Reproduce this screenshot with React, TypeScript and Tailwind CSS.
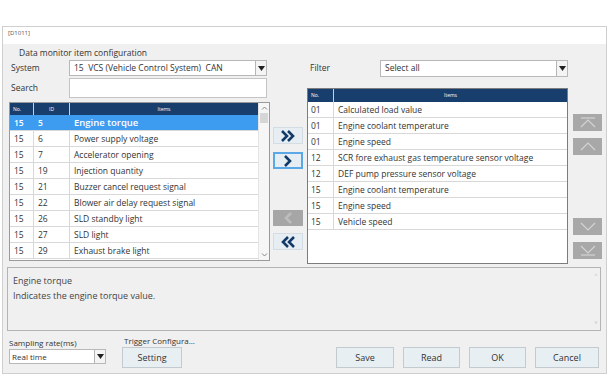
import React from 'react';

const leftRows = [
  ['15', '5', 'Engine torque'],
  ['15', '6', 'Power supply voltage'],
  ['15', '7', 'Accelerator opening'],
  ['15', '19', 'Injection quantity'],
  ['15', '21', 'Buzzer cancel request signal'],
  ['15', '22', 'Blower air delay request signal'],
  ['15', '26', 'SLD standby light'],
  ['15', '27', 'SLD light'],
  ['15', '29', 'Exhaust brake light'],
];

const rightRows = [
  ['01', 'Calculated load value'],
  ['01', 'Engine coolant temperature'],
  ['01', 'Engine speed'],
  ['12', 'SCR fore exhaust gas temperature sensor voltage'],
  ['12', 'DEF pump pressure sensor voltage'],
  ['15', 'Engine coolant temperature'],
  ['15', 'Engine speed'],
  ['15', 'Vehicle speed'],
];

const Arrow = () => (
  <div className="flex h-full w-[11px] items-center justify-center border-l border-[#b5b5b5] bg-[#f4f4f4]">
    <svg width="7" height="5" viewBox="0 0 7 5">
      <path d="M0 0H7L3.5 5Z" fill="#222" />
    </svg>
  </div>
);

const Select = ({ value, className }: { value: string; className: string }) => (
  <div className={`flex items-center border border-[#b8b8b8] bg-white ${className}`}>
    <span className="flex-1 truncate whitespace-pre pl-[4px]">{value}</span>
    <Arrow />
  </div>
);

const Chevrons = ({ dir, double, color }: { dir: 'l' | 'r'; double?: boolean; color: string }) => {
  const rot = dir === 'r' ? 0 : 180;
  return (
    <svg width="14" height="12" viewBox="0 0 14 12" style={{ transform: `rotate(${rot}deg)` }}>
      {double ? (
        <>
          <path d="M1 1L6 6L1 11" fill="none" stroke={color} strokeWidth="2.6" />
          <path d="M7 1L12 6L7 11" fill="none" stroke={color} strokeWidth="2.6" />
        </>
      ) : (
        <path d="M4 1L9 6L4 11" fill="none" stroke={color} strokeWidth="2.6" />
      )}
    </svg>
  );
};

const SideBtn = ({ icon }: { icon: 'top' | 'up' | 'down' | 'bottom' }) => (
  <div className="flex h-[17px] w-[29px] items-center justify-center bg-[#a8a8a8]">
    <svg width="16" height="11" viewBox="0 0 16 11">
      {icon === 'top' && (
        <>
          <path d="M1 1H15" stroke="#d4d4d4" strokeWidth="1.2" />
          <path d="M1 10L8 3L15 10" fill="none" stroke="#d4d4d4" strokeWidth="1.2" />
        </>
      )}
      {icon === 'up' && <path d="M1 9L8 2L15 9" fill="none" stroke="#d4d4d4" strokeWidth="1.2" />}
      {icon === 'down' && <path d="M1 2L8 9L15 2" fill="none" stroke="#d4d4d4" strokeWidth="1.2" />}
      {icon === 'bottom' && (
        <>
          <path d="M1 1L8 8L15 1" fill="none" stroke="#d4d4d4" strokeWidth="1.2" />
          <path d="M1 10H15" stroke="#d4d4d4" strokeWidth="1.2" />
        </>
      )}
    </svg>
  </div>
);

const Btn = ({ label, className }: { label: string; className: string }) => (
  <div className={`flex h-[21px] items-center justify-center border border-[#c3cbd0] bg-[#e8eff3] text-[9px] text-[#333] ${className}`}>
    {label}
  </div>
);

export default function App() {
  return (
    <div className="h-[386px] w-[609px] bg-white pt-[26px] pl-[2px] text-[#333]" style={{ fontFamily: '"Open Sans", "Noto Sans", sans-serif' }}>
      <div className="flex h-[348px] w-[605px] flex-col border border-[#cfcfcf] bg-[#f0f0f0]">
        <div className="h-[17px] bg-white pl-[5px] pt-[2px] text-[6px] text-[#555]">[D1011]</div>

        <div className="flex">
          {/* left column */}
          <div className="ml-[6px] flex w-[261px] flex-col text-[8.5px]">
            <div className="mt-[1px] h-[15px] pl-[10px] leading-[15px]">Data monitor item configuration</div>
            <div className="flex h-[16px] items-center">
              <span className="w-[60px] pl-[2px]">System</span>
              <Select value="15  VCS (Vehicle Control System)  CAN" className="h-[16px] w-[198px]" />
            </div>
            <div className="mt-[2px] flex h-[20px] items-center">
              <span className="w-[60px] pl-[2px]">Search</span>
              <div className="h-[20px] w-[198px] border border-[#c4c4c4] bg-white" />
            </div>
            <div className="mt-[4px] flex h-[159px] border border-[#9a9a9a] bg-white">
              <div className="flex flex-1 flex-col">
                <div className="flex h-[12px] bg-[#173e6c] text-[5px] text-white">
                  <span className="w-[24px] border-r border-[#d0d0d0] pl-[3px] leading-[12px]">No.</span>
                  <span className="w-[36px] border-r border-[#d0d0d0] text-center leading-[12px]">ID</span>
                  <span className="flex-1 text-center leading-[12px]">Items</span>
                </div>
                {leftRows.map((r, i) => (
                  <div
                    key={i}
                    className={`flex h-[16px] border-b border-[#d8d8d8] ${i === 0 ? 'bg-[#3d9cf0] font-semibold text-white' : ''}`}
                  >
                    <span className={`w-[24px] pl-[4px] leading-[16px] ${i === 0 ? '' : 'border-r border-[#d8d8d8]'}`}>{r[0]}</span>
                    <span className={`w-[36px] pl-[4px] leading-[16px] ${i === 0 ? '' : 'border-r border-[#d8d8d8]'}`}>{r[1]}</span>
                    <span className={`flex-1 pl-[4px] leading-[16px] ${i === 0 ? 'text-[9.5px]' : ''}`}>{r[2]}</span>
                  </div>
                ))}
              </div>
              <div className="flex w-[11px] flex-col items-center border-l border-[#e4e4e4] bg-[#f6f6f6]">
                <svg width="7" height="6" viewBox="0 0 7 6" className="mt-[2px]">
                  <path d="M1 4.5L3.5 2L6 4.5" fill="none" stroke="#888" strokeWidth="1" />
                </svg>
                <div className="mt-[2px] h-[10px] w-[8px] bg-[#d6d6d6]" />
                <svg width="7" height="6" viewBox="0 0 7 6" className="mt-auto mb-[2px]">
                  <path d="M1 1.5L3.5 4L6 1.5" fill="none" stroke="#888" strokeWidth="1" />
                </svg>
              </div>
            </div>
          </div>

          {/* middle transfer buttons */}
          <div className="ml-[3px] flex w-[30px] flex-col pt-[83px]">
            <div className="flex h-[17px] items-center justify-center border border-[#d4dde3] bg-[#e6eef4]">
              <Chevrons dir="r" double color="#123a68" />
            </div>
            <div className="mt-[8px] flex h-[17px] items-center justify-center border-2 border-[#5aa9e6] bg-[#e6eef4]">
              <Chevrons dir="r" color="#123a68" />
            </div>
            <div className="mt-[41px] flex h-[16px] items-center justify-center bg-[#a6a6a6]">
              <Chevrons dir="l" color="#bdbdbd" />
            </div>
            <div className="mt-[7px] flex h-[17px] items-center justify-center border border-[#d4dde3] bg-[#e6eef4]">
              <Chevrons dir="l" double color="#123a68" />
            </div>
          </div>

          {/* right column */}
          <div className="ml-[4px] flex w-[261px] flex-col text-[8.5px]">
            <div className="mt-[16px] flex h-[17px] items-center">
              <span className="w-[73px] pl-[3px]">Filter</span>
              <Select value="Select all" className="h-[17px] w-[188px]" />
            </div>
            <div className="mt-[11px] flex h-[176px] flex-col border border-[#7c7c7c] bg-white">
              <div className="flex h-[13px] bg-[#173e6c] text-[5px] text-white">
                <span className="w-[26px] border-r border-[#d0d0d0] pl-[3px] leading-[13px]">No.</span>
                <span className="flex-1 text-center leading-[13px]">Items</span>
              </div>
              {rightRows.map((r, i) => (
                <div key={i} className="flex h-[16px] border-b border-[#d8d8d8]">
                  <span className="w-[26px] border-r border-[#d8d8d8] pl-[3px] leading-[16px]">{r[0]}</span>
                  <span className="flex-1 pl-[4px] leading-[16px]">{r[1]}</span>
                </div>
              ))}
            </div>
          </div>

          {/* far right order buttons */}
          <div className="ml-[5px] flex flex-col gap-[7px] pt-[70px]">
            <SideBtn icon="top" />
            <SideBtn icon="up" />
            <div className="h-[49px]" />
            <SideBtn icon="down" />
            <SideBtn icon="bottom" />
          </div>
        </div>

        {/* description */}
        <div className="mt-[3px] ml-[4px] flex h-[64px] w-[594px] border border-[#b4b4b4] bg-[#f0f0f0]">
          <div className="flex-1 pl-[5px] pt-[5px] text-[9px] leading-[15px] text-[#444]">
            <div>Engine torque</div>
            <div>Indicates the engine torque value.</div>
          </div>
          <div className="flex w-[8px] flex-col items-center justify-between py-[4px] text-[5px] text-[#bbb]">
            <span>^</span>
            <span>v</span>
          </div>
        </div>

        {/* footer */}
        <div className="mt-[4px] flex items-end text-[8px]">
          <div className="ml-[6px] flex flex-col">
            <span className="h-[13px] leading-[13px]">Sampling rate(ms)</span>
            <div className="mb-[7px] flex h-[15px] w-[97px] items-center border border-[#b8b8b8] bg-white">
              <span className="flex-1 pl-[2px]">Real time</span>
              <Arrow />
            </div>
          </div>
          <div className="ml-[16px] flex flex-col">
            <span className="h-[12px] pl-[2px] leading-[12px]">Trigger Configura...</span>
            <Btn label="Setting" className="mb-[3px] w-[60px]" />
          </div>
          <div className="ml-auto mr-[7px] mb-[3px] flex gap-[9px]">
            <Btn label="Save" className="w-[58px]" />
            <Btn label="Read" className="w-[57px]" />
            <Btn label="OK" className="w-[57px]" />
            <Btn label="Cancel" className="w-[64px]" />
          </div>
        </div>
      </div>
    </div>
  );
}
